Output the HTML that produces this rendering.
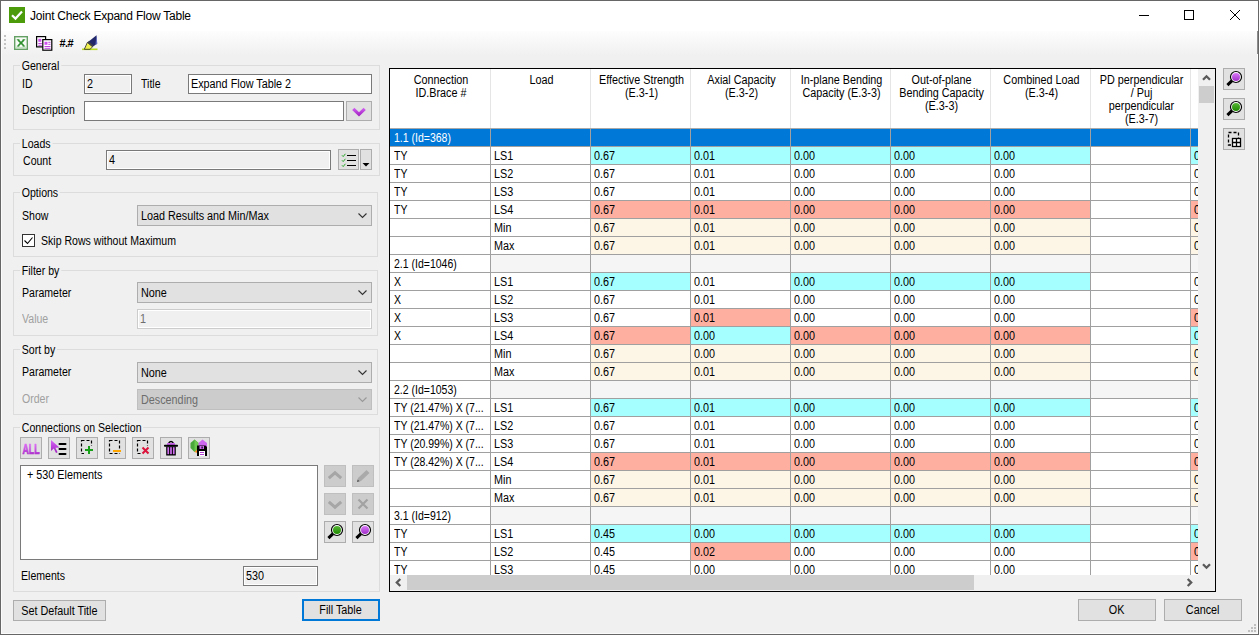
<!DOCTYPE html>
<html><head><meta charset="utf-8"><title>Joint Check Expand Flow Table</title>
<style>
*{box-sizing:border-box;margin:0;padding:0}
html,body{width:1259px;height:635px;overflow:hidden;background:#f0f0f0}
body{font-family:"Liberation Sans",sans-serif;font-size:12px;color:#000;position:relative}
.s{display:inline-block;transform:scaleX(.9);transform-origin:0 50%;white-space:nowrap}
.s0{transform:scaleX(.875)}
.sc{display:inline-block;transform:scaleX(.9);transform-origin:50% 50%;white-space:nowrap}
.abs,.lbl,.tb,.btn,.gb,.cb{position:absolute}
#win{position:absolute;left:0;top:0;width:1259px;height:635px;border:1px solid #666}
#inner{position:absolute;left:1px;top:31px;width:1257px;height:603px;border:1px solid #fbfbfb;border-top:none}
#title{position:absolute;left:1px;top:1px;width:1257px;height:30px;background:#fff}
#title .t{position:absolute;left:29px;top:7px;font-size:12px;line-height:16px;white-space:nowrap;letter-spacing:-.22px}
#tool{position:absolute;left:1px;top:31px;width:1257px;height:25px;background:linear-gradient(#fdfdfd,#f0f0f0)}
.lbl{white-space:nowrap;line-height:14px;height:14px;transform:scaleX(.88);transform-origin:0 0}
.dis{color:#a0a0a0}
.gb{border:1px solid #dcdcdc}
.gb>span{position:absolute;top:-7px;left:6px;background:#f0f0f0;padding:0 2px;line-height:14px;white-space:nowrap;transform:scaleX(.88);transform-origin:0 0}
.tb{border:1px solid #7a7a7a;background:#fff;height:20px;line-height:16px;padding:1px 0 0 2px;white-space:nowrap;overflow:hidden}
.tb.ro{background:#f0f0f0;box-shadow:inset 0 0 0 1px #fff}
.tb.off{border-color:#ccc;background:#f0f0f0;color:#6d6d6d;box-shadow:inset 0 0 0 1px #fff}
.cb{border:1px solid #adadad;background:#e1e1e1;height:21px;line-height:17px;padding:2px 0 0 3px;white-space:nowrap}
.cb.off{background:#cccccc;border-color:#bfbfbf;color:#6d6d6d}
.cb svg{position:absolute;right:4px;top:7px}
.btn{border:1px solid #adadad;background:#e1e1e1;text-align:center;white-space:nowrap}
.btn.off{background:#cccccc;border-color:#bfbfbf}
.btn svg{position:absolute;left:-1px;top:-1px}
.grid{position:absolute;left:389px;top:68px;width:827px;height:524px;border:1px solid #000;background:#fff;overflow:hidden}
.gin{position:absolute;left:0;top:0;width:808px;height:506px;overflow:hidden}
.ghead{position:absolute;left:0;top:0;width:900px;height:60px;border-bottom:1px solid #a8a8a8;background:#fff}
.hc{position:absolute;top:0;height:59px;width:100px;border-right:1px solid #e5e5e5}
.hs{position:absolute;left:1px;top:5px;width:110px;text-align:center;line-height:13px;transform:scaleX(.9);transform-origin:0 0}
.row{position:absolute;left:0;width:900px;height:18px}
.c{position:absolute;top:0;height:18px;width:100px;border-right:1px solid #a0a0a0;border-bottom:1px solid #a0a0a0;line-height:17px;padding:1px 0 0 3px;white-space:nowrap;overflow:hidden;background:#fff}
.gr .c{background:#f5f5f5}
.gr .c.f{background:#fff}
.sel .c{background:#0078d7;color:#fff}
.vsb{position:absolute;left:808px;top:0;width:17px;height:506px;background:#f0f0f0}
.hsb{position:absolute;left:0;top:506px;width:808px;height:16px;background:#f0f0f0}
.corner{position:absolute;left:808px;top:506px;width:17px;height:16px;background:#f0f0f0}
.thumb{position:absolute;background:#cdcdcd}
</style></head><body>
<div id="title">
<svg class="abs" style="left:8px;top:6px" width="16" height="16" viewBox="0 0 16 16"><rect width="16" height="16" fill="#4b9b0a"/><path d="M3 8.2 L6.5 11.6 L13 4.6" fill="none" stroke="#fff" stroke-width="2.2"/></svg>
<div class="t">Joint Check Expand Flow Table</div>
<svg class="abs" style="left:1130px;top:0" width="128" height="30" viewBox="0 0 128 30"><g stroke="#000" stroke-width="1" fill="none"><path d="M8 14.5h10"/><rect x="53.5" y="9.5" width="9" height="9"/><path d="M99 9l10 10M109 9l-10 10"/></g></svg>
</div>
<div id="tool">
<svg class="abs" style="left:3px;top:4px" width="3" height="15" viewBox="0 0 3 15"><g fill="#c3c3c3"><rect x="0" y="0" width="2" height="2"/><rect x="0" y="4" width="2" height="2"/><rect x="0" y="8" width="2" height="2"/><rect x="0" y="12" width="2" height="2"/></g></svg>
<svg class="abs" style="left:13px;top:5px" width="14" height="14" viewBox="0 0 14 14"><rect x=".7" y=".7" width="12.600" height="12.600" fill="#f6fbf6" stroke="#64a064" stroke-width="1.400"/><path d="M4 3.800l6 6.200M10 3.800l-6 6.200" stroke="#2f8f2f" stroke-width="1.700"/><path d="M2.800 3.600h2.600M8.600 3.600h2.600M2.800 10.200h2.600M8.600 10.200h2.600" stroke="#4a9a4a" stroke-width=".9"/><path d="M2 11.800h10" stroke="#b4d6b4" stroke-width="1"/></svg>
<svg class="abs" style="left:35px;top:5px" width="17" height="15" viewBox="0 0 17 15"><rect x=".6" y=".6" width="9" height="10.300" fill="#fff" stroke="#000" stroke-width="1.200"/><rect x="2.300" y="2.800" width="3" height="3" fill="#d050f0"/><path d="M2.300 7.500h3.500M2.300 9.300h3.500" stroke="#c040e0" stroke-width="1"/><rect x="6.800" y="3.600" width="9" height="10.600" fill="#fff" stroke="#000" stroke-width="1.200"/><rect x="8.500" y="5.800" width="3" height="3" fill="#d050f0"/><path d="M12.300 6.300h2.200M12.300 8.300h2.200M8.500 10.500h6M8.500 12.300h6" stroke="#c040e0" stroke-width="1"/></svg>
<div class="abs" style="left:58.500px;top:6px;font-weight:bold;font-size:11px;line-height:13px;letter-spacing:-.6px;white-space:nowrap">#.#</div>
<svg class="abs" style="left:81px;top:3px" width="17" height="17" viewBox="0 0 17 17"><path d="M0 15.300h15.500" stroke="#b8e020" stroke-width="1.600"/><path d="M5.400 8.400L10.600 12.800L8 15.300H2.300z" fill="#f0f050" stroke="#222" stroke-width=".8"/><path d="M14.500 1.200L15.200 9.700L10.600 12.800L5.400 8.400z" fill="#23286a"/><path d="M5.400 8.400l1.200-1.100 5.200 4.400-1.200 1.100z" fill="#444"/><path d="M14.500 1.200l.7 8.500-1.800 1.200z" fill="#6470c8"/></svg>
</div>
<div id="inner"></div>

<!-- General -->
<div class="gb" style="left:13px;top:65px;width:367px;height:65px"><span>General</span></div>
<div class="lbl" style="left:22px;top:77px">ID</div>
<div class="tb ro" style="left:84px;top:74px;width:48px"><span class="s">2</span></div>
<div class="lbl" style="left:141px;top:77px">Title</div>
<div class="tb" style="left:188px;top:74px;width:184px"><span class="s">Expand Flow Table 2</span></div>
<div class="lbl" style="left:22px;top:103px">Description</div>
<div class="tb" style="left:84px;top:101px;width:260px"></div>
<div class="btn" style="left:346px;top:101px;width:26px;height:20px"><svg width="26" height="20" viewBox="0 0 26 20"><defs><linearGradient id="gch" gradientUnits="userSpaceOnUse" x1="0" y1="6" x2="0" y2="15"><stop offset="0" stop-color="#d868f8"/><stop offset="1" stop-color="#a020c0"/></linearGradient></defs><path d="M7.300 7.800L13 13.300L18.700 7.800" fill="none" stroke="url(#gch)" stroke-width="3.200"/></svg></div>

<!-- Loads -->
<div class="gb" style="left:13px;top:143px;width:367px;height:33px"><span>Loads</span></div>
<div class="lbl" style="left:23px;top:154px">Count</div>
<div class="tb ro" style="left:106px;top:150px;width:225px"><span class="s">4</span></div>
<div class="btn" style="left:338px;top:149px;width:21px;height:21px"><svg width="21" height="21" viewBox="0 0 21 21"><path d="M9 6.500h9M9 11.500h9M9 16.500h9" stroke="#000" stroke-width="1.100"/><path d="M4 6.300l1.200 1.300 2.200-2.800M4 11.300l1.200 1.300 2.200-2.800M4 16.300l1.200 1.300 2.200-2.800" fill="none" stroke="#2aa82a" stroke-width="1"/></svg></div>
<div class="btn" style="left:360px;top:149px;width:12px;height:21px"><svg width="12" height="21" viewBox="0 0 12 21"><path d="M2.500 14h7l-3.500 3.500z" fill="#000"/></svg></div>

<!-- Options -->
<div class="gb" style="left:13px;top:192px;width:365px;height:65px"><span>Options</span></div>
<div class="lbl" style="left:22px;top:209px">Show</div>
<div class="cb" style="left:137px;top:205px;width:235px"><span class="s">Load Results and Min/Max</span><svg width="9" height="6" viewBox="0 0 9 6"><path d="M.5 .5l4 4 4-4" fill="none" stroke="#333" stroke-width="1.1"/></svg></div>
<div class="abs" style="left:22px;top:234px;width:13px;height:13px;border:1px solid #333;background:#fff"><svg width="11" height="11" viewBox="0 0 11 11" style="display:block"><path d="M1.5 5.5l3 3 5-6" fill="none" stroke="#000" stroke-width="1.1"/></svg></div>
<div class="lbl" style="left:41px;top:234px">Skip Rows without Maximum</div>

<!-- Filter by -->
<div class="gb" style="left:13px;top:270px;width:365px;height:66px"><span>Filter by</span></div>
<div class="lbl" style="left:22px;top:286px">Parameter</div>
<div class="cb" style="left:137px;top:282px;width:235px"><span class="s">None</span><svg width="9" height="6" viewBox="0 0 9 6"><path d="M.5 .5l4 4 4-4" fill="none" stroke="#333" stroke-width="1.1"/></svg></div>
<div class="lbl dis" style="left:22px;top:312px">Value</div>
<div class="tb off" style="left:137px;top:309px;width:235px"><span class="s">1</span></div>

<!-- Sort by -->
<div class="gb" style="left:13px;top:349px;width:365px;height:66px"><span>Sort by</span></div>
<div class="lbl" style="left:22px;top:365px">Parameter</div>
<div class="cb" style="left:137px;top:362px;width:235px"><span class="s">None</span><svg width="9" height="6" viewBox="0 0 9 6"><path d="M.5 .5l4 4 4-4" fill="none" stroke="#333" stroke-width="1.1"/></svg></div>
<div class="lbl dis" style="left:22px;top:392px">Order</div>
<div class="cb off" style="left:137px;top:389px;width:235px"><span class="s">Descending</span><svg width="9" height="6" viewBox="0 0 9 6"><path d="M.5 .5l4 4 4-4" fill="none" stroke="#999" stroke-width="1.1"/></svg></div>

<!-- Connections -->
<div class="gb" style="left:13px;top:427px;width:367px;height:165px"><span>Connections on Selection</span></div>
<div class="btn" style="left:20px;top:437px;width:22px;height:22px"><svg width="22" height="22" viewBox="0 0 22 22"><defs><linearGradient id="gall" x1="0" y1="0" x2="0" y2="1"><stop offset="0" stop-color="#e878ff"/><stop offset="1" stop-color="#a020c0"/></linearGradient></defs><text x="2.500" y="17.300" font-family="Liberation Sans,sans-serif" font-weight="bold" font-size="14.500" textLength="17" lengthAdjust="spacingAndGlyphs" fill="url(#gall)" stroke="url(#gall)" stroke-width=".7">ALL</text></svg></div>
<div class="btn" style="left:48px;top:437px;width:22px;height:22px"><svg width="22" height="22" viewBox="0 0 22 22"><defs><linearGradient id="gcur" x1="0" y1="0" x2="0" y2="1"><stop offset="0" stop-color="#d868f8"/><stop offset="1" stop-color="#a020c0"/></linearGradient></defs><path d="M3 3v11l2.8-2.6 2.2 4.6 1.6-.8-2.2-4.4 4-.4z" fill="url(#gcur)"/><path d="M11.5 7h6M11.5 12h6M11.5 17h6" stroke="#000" stroke-width="2" stroke-linecap="round"/></svg></div>
<div class="btn" style="left:76px;top:437px;width:22px;height:22px"><svg width="22" height="22" viewBox="0 0 22 22"><path d="M5.5 3.5h10v13h-10z" fill="none" stroke="#000" stroke-width="1.2" stroke-dasharray="3 2"/><rect x="8" y="9" width="9" height="9" fill="#e1e1e1"/><path d="M13 9v8M9 13h8" stroke="#18a018" stroke-width="2"/></svg></div>
<div class="btn" style="left:104px;top:437px;width:22px;height:22px"><svg width="22" height="22" viewBox="0 0 22 22"><path d="M5.5 3.5h10v13h-10z" fill="none" stroke="#000" stroke-width="1.2" stroke-dasharray="3 2"/><rect x="8" y="12" width="9" height="4" fill="#e1e1e1"/><path d="M9 14h8" stroke="#ffa500" stroke-width="2"/></svg></div>
<div class="btn" style="left:132px;top:437px;width:22px;height:22px"><svg width="22" height="22" viewBox="0 0 22 22"><path d="M5.5 3.5h10v13h-10z" fill="none" stroke="#000" stroke-width="1.2" stroke-dasharray="3 2"/><rect x="9" y="9" width="9" height="9" fill="#e1e1e1"/><path d="M10.5 10.5l6 6M16.5 10.5l-6 6" stroke="#dc143c" stroke-width="2"/></svg></div>
<div class="btn" style="left:160px;top:437px;width:22px;height:22px"><svg width="22" height="22" viewBox="0 0 22 22"><path d="M8.700 6q2.300-2.800 4.600 0" fill="none" stroke="#000" stroke-width="1.500"/><rect x="7" y="6" width="8" height="2" fill="#cc66ee"/><rect x="4" y="7.700" width="14" height="2" rx=".8" fill="#000"/><rect x="6.200" y="9.500" width="9.600" height="9" fill="#000"/><rect x="7.400" y="10.200" width="1.700" height="7" fill="#d070f0"/><rect x="10.150" y="10.200" width="1.700" height="7" fill="#d070f0"/><rect x="12.900" y="10.200" width="1.700" height="7" fill="#d070f0"/></svg></div>
<div class="btn" style="left:188px;top:437px;width:22px;height:22px"><svg width="22" height="22" viewBox="0 0 22 22"><path d="M2.5 6l4-3.5 4 3.5v5l-4 4-4-4z" fill="#4aa83a"/><path d="M6.500 2.500l4 3.500v5l-4 4z" fill="#6cc84e"/><path d="M10.500 6l4-3.500 4.500 3.500v5h-8.500z" fill="#cc66ee"/><path d="M6.500 15l4-4 1-2 1 2v6z" fill="#ff8c1a"/><path d="M9 8.500h8.500l1.500 1.500v9h-10z" fill="#000"/><rect x="11.500" y="9" width="4.500" height="3" fill="#cc66ee"/><rect x="13.500" y="9.500" width="1.200" height="2" fill="#000"/><rect x="11" y="14" width="6" height="5" fill="#fff"/><path d="M12 15.500h4M12 17.500h4" stroke="#b040d0" stroke-width="1"/></svg></div>
<div class="tb" style="left:20px;top:465px;width:298px;height:95px;padding:1px 0 0 6px"><span class="s">+ 530 Elements</span></div>
<div class="btn off" style="left:324px;top:465px;width:22px;height:22px"><svg width="22" height="22" viewBox="0 0 22 22"><path d="M4.800 13.200l6.200-5.400 6.200 5.400" fill="none" stroke="#a6a6a6" stroke-width="3"/></svg></div>
<div class="btn off" style="left:352px;top:465px;width:22px;height:22px"><svg width="22" height="22" viewBox="0 0 22 22"><path d="M5 17l1-4 8.500-8 3 3-8.500 8z" fill="#aaaaaa"/><path d="M5 17l.7-2.600 1.900 1.900z" fill="#555"/></svg></div>
<div class="btn off" style="left:324px;top:493px;width:22px;height:22px"><svg width="22" height="22" viewBox="0 0 22 22"><path d="M4.800 8.800l6.200 5.400 6.200-5.400" fill="none" stroke="#a6a6a6" stroke-width="3"/></svg></div>
<div class="btn off" style="left:352px;top:493px;width:22px;height:22px"><svg width="22" height="22" viewBox="0 0 22 22"><path d="M6.500 6.500l9 9M15.500 6.500l-9 9" stroke="#a2a2a2" stroke-width="2.200"/></svg></div>
<div class="btn" style="left:324px;top:521px;width:22px;height:22px"><svg width="22" height="22" viewBox="0 0 22 22"><defs><linearGradient id="mg1" x1="0" y1="0" x2="0" y2="1"><stop offset="0" stop-color="#58b838"/><stop offset="1" stop-color="#1e8a00"/></linearGradient></defs><path d="M9.6 12.2L4.4 17.2" stroke="#000" stroke-width="3" stroke-linecap="butt" fill="none"/><circle cx="13" cy="9" r="5.5" fill="#fff" stroke="#000" stroke-width="1.2"/><circle cx="13" cy="9" r="4" fill="url(#mg1)"/></svg></div>
<div class="btn" style="left:352px;top:521px;width:22px;height:22px"><svg width="22" height="22" viewBox="0 0 22 22"><defs><linearGradient id="mp1" x1="0" y1="0" x2="0" y2="1"><stop offset="0" stop-color="#d878f8"/><stop offset="1" stop-color="#a030c8"/></linearGradient></defs><path d="M9.6 12.2L4.4 17.2" stroke="#000" stroke-width="3" stroke-linecap="butt" fill="none"/><circle cx="13" cy="9" r="5.5" fill="#fff" stroke="#000" stroke-width="1.2"/><circle cx="13" cy="9" r="4" fill="url(#mp1)"/></svg></div>
<div class="lbl" style="left:21px;top:569px">Elements</div>
<div class="tb ro" style="left:243px;top:566px;width:75px"><span class="s">530</span></div>

<div class="btn" style="left:13px;top:600px;width:93px;height:21px;line-height:21px"><span class="sc">Set Default Title</span></div>
<div class="btn" style="left:302px;top:599px;width:78px;height:22px;line-height:18px;border:2px solid #0078d7"><span class="sc">Fill Table</span></div>
<div class="btn" style="left:1078px;top:599px;width:78px;height:22px;line-height:20px"><span class="sc">OK</span></div>
<div class="btn" style="left:1164px;top:599px;width:78px;height:22px;line-height:20px"><span class="sc">Cancel</span></div>

<div class="btn" style="left:1223px;top:68px;width:22px;height:22px"><svg width="22" height="22" viewBox="0 0 22 22"><defs><linearGradient id="mp2" x1="0" y1="0" x2="0" y2="1"><stop offset="0" stop-color="#d878f8"/><stop offset="1" stop-color="#a030c8"/></linearGradient></defs><path d="M9.6 12.2L4.4 17.2" stroke="#000" stroke-width="3" stroke-linecap="butt" fill="none"/><circle cx="13" cy="9" r="5.5" fill="#fff" stroke="#000" stroke-width="1.2"/><circle cx="13" cy="9" r="4" fill="url(#mp2)"/></svg></div>
<div class="btn" style="left:1223px;top:98px;width:22px;height:22px"><svg width="22" height="22" viewBox="0 0 22 22"><defs><linearGradient id="mg2" x1="0" y1="0" x2="0" y2="1"><stop offset="0" stop-color="#58b838"/><stop offset="1" stop-color="#1e8a00"/></linearGradient></defs><path d="M9.6 12.2L4.4 17.2" stroke="#000" stroke-width="3" stroke-linecap="butt" fill="none"/><circle cx="13" cy="9" r="5.5" fill="#fff" stroke="#000" stroke-width="1.2"/><circle cx="13" cy="9" r="4" fill="url(#mg2)"/></svg></div>
<div class="btn" style="left:1223px;top:128px;width:22px;height:22px"><svg width="22" height="22" viewBox="0 0 22 22"><path d="M5.500 4.500h10v12.500h-10z" fill="none" stroke="#000" stroke-width="1.300" stroke-dasharray="3 2"/><rect x="9.500" y="10.500" width="8" height="8" fill="#fff" stroke="#000" stroke-width="1.300"/><path d="M13.500 10.500v8M9.500 14.500h8" stroke="#000" stroke-width="1.300"/></svg></div>

<div class="grid"><div class="gin">
<div class="ghead">
<div class="hc" style="left:0;width:101px;padding-left:4px"><div class="hs" style="width:111.1px">Connection<br>ID.Brace #</div></div>
<div class="hc" style="left:101px"><div class="hs">Load</div></div>
<div class="hc" style="left:201px"><div class="hs">Effective Strength<br>(E.3-1)</div></div>
<div class="hc" style="left:301px"><div class="hs">Axial Capacity<br>(E.3-2)</div></div>
<div class="hc" style="left:401px"><div class="hs">In-plane Bending<br>Capacity (E.3-3)</div></div>
<div class="hc" style="left:501px"><div class="hs">Out-of-plane<br>Bending Capacity<br>(E.3-3)</div></div>
<div class="hc" style="left:601px"><div class="hs">Combined Load<br>(E.3-4)</div></div>
<div class="hc" style="left:701px"><div class="hs">PD perpendicular<br>/ Puj<br>perpendicular<br>(E.3-7)</div></div>
<div class="hc" style="left:801px"><div class="hs"></div></div>
</div>
<div class="row gr sel" style="top:60px">
<div class="c" style="left:0;width:101px;padding-left:4px"><span class="s s0">1.1 (Id=368)</span></div>
<div class="c" style="left:101px"></div>
<div class="c" style="left:201px"></div>
<div class="c" style="left:301px"></div>
<div class="c" style="left:401px"></div>
<div class="c" style="left:501px"></div>
<div class="c" style="left:601px"></div>
<div class="c" style="left:701px"></div>
<div class="c" style="left:801px"></div>
</div>
<div class="row" style="top:78px">
<div class="c" style="left:0;width:101px;padding-left:4px"><span class="s s0">TY</span></div>
<div class="c" style="left:101px"><span class="s">LS1</span></div>
<div class="c" style="left:201px;background:#a6ffff"><span class="s">0.67</span></div>
<div class="c" style="left:301px;background:#a6ffff"><span class="s">0.01</span></div>
<div class="c" style="left:401px;background:#a6ffff"><span class="s">0.00</span></div>
<div class="c" style="left:501px;background:#a6ffff"><span class="s">0.00</span></div>
<div class="c" style="left:601px;background:#a6ffff"><span class="s">0.00</span></div>
<div class="c" style="left:701px"></div>
<div class="c" style="left:801px;background:#a6ffff"><span class="s">0.00</span></div>
</div>
<div class="row" style="top:96px">
<div class="c" style="left:0;width:101px;padding-left:4px"><span class="s s0">TY</span></div>
<div class="c" style="left:101px"><span class="s">LS2</span></div>
<div class="c" style="left:201px"><span class="s">0.67</span></div>
<div class="c" style="left:301px"><span class="s">0.01</span></div>
<div class="c" style="left:401px"><span class="s">0.00</span></div>
<div class="c" style="left:501px"><span class="s">0.00</span></div>
<div class="c" style="left:601px"><span class="s">0.00</span></div>
<div class="c" style="left:701px"></div>
<div class="c" style="left:801px"><span class="s">0.00</span></div>
</div>
<div class="row" style="top:114px">
<div class="c" style="left:0;width:101px;padding-left:4px"><span class="s s0">TY</span></div>
<div class="c" style="left:101px"><span class="s">LS3</span></div>
<div class="c" style="left:201px"><span class="s">0.67</span></div>
<div class="c" style="left:301px"><span class="s">0.01</span></div>
<div class="c" style="left:401px"><span class="s">0.00</span></div>
<div class="c" style="left:501px"><span class="s">0.00</span></div>
<div class="c" style="left:601px"><span class="s">0.00</span></div>
<div class="c" style="left:701px"></div>
<div class="c" style="left:801px"><span class="s">0.00</span></div>
</div>
<div class="row" style="top:132px">
<div class="c" style="left:0;width:101px;padding-left:4px"><span class="s s0">TY</span></div>
<div class="c" style="left:101px"><span class="s">LS4</span></div>
<div class="c" style="left:201px;background:#ffafa0"><span class="s">0.67</span></div>
<div class="c" style="left:301px;background:#ffafa0"><span class="s">0.01</span></div>
<div class="c" style="left:401px;background:#ffafa0"><span class="s">0.00</span></div>
<div class="c" style="left:501px;background:#ffafa0"><span class="s">0.00</span></div>
<div class="c" style="left:601px;background:#ffafa0"><span class="s">0.00</span></div>
<div class="c" style="left:701px"></div>
<div class="c" style="left:801px;background:#ffafa0"><span class="s">0.00</span></div>
</div>
<div class="row" style="top:150px">
<div class="c" style="left:0;width:101px;padding-left:4px"></div>
<div class="c" style="left:101px"><span class="s">Min</span></div>
<div class="c" style="left:201px;background:#fdf5e6"><span class="s">0.67</span></div>
<div class="c" style="left:301px;background:#fdf5e6"><span class="s">0.01</span></div>
<div class="c" style="left:401px;background:#fdf5e6"><span class="s">0.00</span></div>
<div class="c" style="left:501px;background:#fdf5e6"><span class="s">0.00</span></div>
<div class="c" style="left:601px;background:#fdf5e6"><span class="s">0.00</span></div>
<div class="c" style="left:701px"></div>
<div class="c" style="left:801px;background:#fdf5e6"><span class="s">0.00</span></div>
</div>
<div class="row" style="top:168px">
<div class="c" style="left:0;width:101px;padding-left:4px"></div>
<div class="c" style="left:101px"><span class="s">Max</span></div>
<div class="c" style="left:201px;background:#fdf5e6"><span class="s">0.67</span></div>
<div class="c" style="left:301px;background:#fdf5e6"><span class="s">0.01</span></div>
<div class="c" style="left:401px;background:#fdf5e6"><span class="s">0.00</span></div>
<div class="c" style="left:501px;background:#fdf5e6"><span class="s">0.00</span></div>
<div class="c" style="left:601px;background:#fdf5e6"><span class="s">0.00</span></div>
<div class="c" style="left:701px"></div>
<div class="c" style="left:801px;background:#fdf5e6"><span class="s">0.00</span></div>
</div>
<div class="row gr" style="top:186px">
<div class="c f" style="left:0;width:101px;padding-left:4px"><span class="s s0">2.1 (Id=1046)</span></div>
<div class="c" style="left:101px"></div>
<div class="c" style="left:201px"></div>
<div class="c" style="left:301px"></div>
<div class="c" style="left:401px"></div>
<div class="c" style="left:501px"></div>
<div class="c" style="left:601px"></div>
<div class="c" style="left:701px"></div>
<div class="c" style="left:801px"></div>
</div>
<div class="row" style="top:204px">
<div class="c" style="left:0;width:101px;padding-left:4px"><span class="s s0">X</span></div>
<div class="c" style="left:101px"><span class="s">LS1</span></div>
<div class="c" style="left:201px;background:#a6ffff"><span class="s">0.67</span></div>
<div class="c" style="left:301px"><span class="s">0.01</span></div>
<div class="c" style="left:401px;background:#a6ffff"><span class="s">0.00</span></div>
<div class="c" style="left:501px;background:#a6ffff"><span class="s">0.00</span></div>
<div class="c" style="left:601px;background:#a6ffff"><span class="s">0.00</span></div>
<div class="c" style="left:701px"></div>
<div class="c" style="left:801px"><span class="s">0.00</span></div>
</div>
<div class="row" style="top:222px">
<div class="c" style="left:0;width:101px;padding-left:4px"><span class="s s0">X</span></div>
<div class="c" style="left:101px"><span class="s">LS2</span></div>
<div class="c" style="left:201px"><span class="s">0.67</span></div>
<div class="c" style="left:301px"><span class="s">0.01</span></div>
<div class="c" style="left:401px"><span class="s">0.00</span></div>
<div class="c" style="left:501px"><span class="s">0.00</span></div>
<div class="c" style="left:601px"><span class="s">0.00</span></div>
<div class="c" style="left:701px"></div>
<div class="c" style="left:801px"><span class="s">0.00</span></div>
</div>
<div class="row" style="top:240px">
<div class="c" style="left:0;width:101px;padding-left:4px"><span class="s s0">X</span></div>
<div class="c" style="left:101px"><span class="s">LS3</span></div>
<div class="c" style="left:201px"><span class="s">0.67</span></div>
<div class="c" style="left:301px;background:#ffafa0"><span class="s">0.01</span></div>
<div class="c" style="left:401px"><span class="s">0.00</span></div>
<div class="c" style="left:501px"><span class="s">0.00</span></div>
<div class="c" style="left:601px"><span class="s">0.00</span></div>
<div class="c" style="left:701px"></div>
<div class="c" style="left:801px;background:#ffafa0"><span class="s">0.00</span></div>
</div>
<div class="row" style="top:258px">
<div class="c" style="left:0;width:101px;padding-left:4px"><span class="s s0">X</span></div>
<div class="c" style="left:101px"><span class="s">LS4</span></div>
<div class="c" style="left:201px;background:#ffafa0"><span class="s">0.67</span></div>
<div class="c" style="left:301px;background:#a6ffff"><span class="s">0.00</span></div>
<div class="c" style="left:401px;background:#ffafa0"><span class="s">0.00</span></div>
<div class="c" style="left:501px;background:#ffafa0"><span class="s">0.00</span></div>
<div class="c" style="left:601px;background:#ffafa0"><span class="s">0.00</span></div>
<div class="c" style="left:701px"></div>
<div class="c" style="left:801px;background:#a6ffff"><span class="s">0.00</span></div>
</div>
<div class="row" style="top:276px">
<div class="c" style="left:0;width:101px;padding-left:4px"></div>
<div class="c" style="left:101px"><span class="s">Min</span></div>
<div class="c" style="left:201px;background:#fdf5e6"><span class="s">0.67</span></div>
<div class="c" style="left:301px;background:#fdf5e6"><span class="s">0.00</span></div>
<div class="c" style="left:401px;background:#fdf5e6"><span class="s">0.00</span></div>
<div class="c" style="left:501px;background:#fdf5e6"><span class="s">0.00</span></div>
<div class="c" style="left:601px;background:#fdf5e6"><span class="s">0.00</span></div>
<div class="c" style="left:701px"></div>
<div class="c" style="left:801px;background:#fdf5e6"><span class="s">0.00</span></div>
</div>
<div class="row" style="top:294px">
<div class="c" style="left:0;width:101px;padding-left:4px"></div>
<div class="c" style="left:101px"><span class="s">Max</span></div>
<div class="c" style="left:201px;background:#fdf5e6"><span class="s">0.67</span></div>
<div class="c" style="left:301px;background:#fdf5e6"><span class="s">0.01</span></div>
<div class="c" style="left:401px;background:#fdf5e6"><span class="s">0.00</span></div>
<div class="c" style="left:501px;background:#fdf5e6"><span class="s">0.00</span></div>
<div class="c" style="left:601px;background:#fdf5e6"><span class="s">0.00</span></div>
<div class="c" style="left:701px"></div>
<div class="c" style="left:801px;background:#fdf5e6"><span class="s">0.00</span></div>
</div>
<div class="row gr" style="top:312px">
<div class="c f" style="left:0;width:101px;padding-left:4px"><span class="s s0">2.2 (Id=1053)</span></div>
<div class="c" style="left:101px"></div>
<div class="c" style="left:201px"></div>
<div class="c" style="left:301px"></div>
<div class="c" style="left:401px"></div>
<div class="c" style="left:501px"></div>
<div class="c" style="left:601px"></div>
<div class="c" style="left:701px"></div>
<div class="c" style="left:801px"></div>
</div>
<div class="row" style="top:330px">
<div class="c" style="left:0;width:101px;padding-left:4px"><span class="s s0">TY (21.47%) X (7...</span></div>
<div class="c" style="left:101px"><span class="s">LS1</span></div>
<div class="c" style="left:201px;background:#a6ffff"><span class="s">0.67</span></div>
<div class="c" style="left:301px;background:#a6ffff"><span class="s">0.01</span></div>
<div class="c" style="left:401px;background:#a6ffff"><span class="s">0.00</span></div>
<div class="c" style="left:501px;background:#a6ffff"><span class="s">0.00</span></div>
<div class="c" style="left:601px;background:#a6ffff"><span class="s">0.00</span></div>
<div class="c" style="left:701px"></div>
<div class="c" style="left:801px;background:#a6ffff"><span class="s">0.00</span></div>
</div>
<div class="row" style="top:348px">
<div class="c" style="left:0;width:101px;padding-left:4px"><span class="s s0">TY (21.47%) X (7...</span></div>
<div class="c" style="left:101px"><span class="s">LS2</span></div>
<div class="c" style="left:201px"><span class="s">0.67</span></div>
<div class="c" style="left:301px"><span class="s">0.01</span></div>
<div class="c" style="left:401px"><span class="s">0.00</span></div>
<div class="c" style="left:501px"><span class="s">0.00</span></div>
<div class="c" style="left:601px"><span class="s">0.00</span></div>
<div class="c" style="left:701px"></div>
<div class="c" style="left:801px"><span class="s">0.00</span></div>
</div>
<div class="row" style="top:366px">
<div class="c" style="left:0;width:101px;padding-left:4px"><span class="s s0">TY (20.99%) X (7...</span></div>
<div class="c" style="left:101px"><span class="s">LS3</span></div>
<div class="c" style="left:201px"><span class="s">0.67</span></div>
<div class="c" style="left:301px"><span class="s">0.01</span></div>
<div class="c" style="left:401px"><span class="s">0.00</span></div>
<div class="c" style="left:501px"><span class="s">0.00</span></div>
<div class="c" style="left:601px"><span class="s">0.00</span></div>
<div class="c" style="left:701px"></div>
<div class="c" style="left:801px"><span class="s">0.00</span></div>
</div>
<div class="row" style="top:384px">
<div class="c" style="left:0;width:101px;padding-left:4px"><span class="s s0">TY (28.42%) X (7...</span></div>
<div class="c" style="left:101px"><span class="s">LS4</span></div>
<div class="c" style="left:201px;background:#ffafa0"><span class="s">0.67</span></div>
<div class="c" style="left:301px;background:#ffafa0"><span class="s">0.01</span></div>
<div class="c" style="left:401px;background:#ffafa0"><span class="s">0.00</span></div>
<div class="c" style="left:501px;background:#ffafa0"><span class="s">0.00</span></div>
<div class="c" style="left:601px;background:#ffafa0"><span class="s">0.00</span></div>
<div class="c" style="left:701px"></div>
<div class="c" style="left:801px;background:#ffafa0"><span class="s">0.00</span></div>
</div>
<div class="row" style="top:402px">
<div class="c" style="left:0;width:101px;padding-left:4px"></div>
<div class="c" style="left:101px"><span class="s">Min</span></div>
<div class="c" style="left:201px;background:#fdf5e6"><span class="s">0.67</span></div>
<div class="c" style="left:301px;background:#fdf5e6"><span class="s">0.01</span></div>
<div class="c" style="left:401px;background:#fdf5e6"><span class="s">0.00</span></div>
<div class="c" style="left:501px;background:#fdf5e6"><span class="s">0.00</span></div>
<div class="c" style="left:601px;background:#fdf5e6"><span class="s">0.00</span></div>
<div class="c" style="left:701px"></div>
<div class="c" style="left:801px;background:#fdf5e6"><span class="s">0.00</span></div>
</div>
<div class="row" style="top:420px">
<div class="c" style="left:0;width:101px;padding-left:4px"></div>
<div class="c" style="left:101px"><span class="s">Max</span></div>
<div class="c" style="left:201px;background:#fdf5e6"><span class="s">0.67</span></div>
<div class="c" style="left:301px;background:#fdf5e6"><span class="s">0.01</span></div>
<div class="c" style="left:401px;background:#fdf5e6"><span class="s">0.00</span></div>
<div class="c" style="left:501px;background:#fdf5e6"><span class="s">0.00</span></div>
<div class="c" style="left:601px;background:#fdf5e6"><span class="s">0.00</span></div>
<div class="c" style="left:701px"></div>
<div class="c" style="left:801px;background:#fdf5e6"><span class="s">0.00</span></div>
</div>
<div class="row gr" style="top:438px">
<div class="c f" style="left:0;width:101px;padding-left:4px"><span class="s s0">3.1 (Id=912)</span></div>
<div class="c" style="left:101px"></div>
<div class="c" style="left:201px"></div>
<div class="c" style="left:301px"></div>
<div class="c" style="left:401px"></div>
<div class="c" style="left:501px"></div>
<div class="c" style="left:601px"></div>
<div class="c" style="left:701px"></div>
<div class="c" style="left:801px"></div>
</div>
<div class="row" style="top:456px">
<div class="c" style="left:0;width:101px;padding-left:4px"><span class="s s0">TY</span></div>
<div class="c" style="left:101px"><span class="s">LS1</span></div>
<div class="c" style="left:201px;background:#a6ffff"><span class="s">0.45</span></div>
<div class="c" style="left:301px;background:#a6ffff"><span class="s">0.00</span></div>
<div class="c" style="left:401px;background:#a6ffff"><span class="s">0.00</span></div>
<div class="c" style="left:501px;background:#a6ffff"><span class="s">0.00</span></div>
<div class="c" style="left:601px;background:#a6ffff"><span class="s">0.00</span></div>
<div class="c" style="left:701px"></div>
<div class="c" style="left:801px;background:#a6ffff"><span class="s">0.00</span></div>
</div>
<div class="row" style="top:474px">
<div class="c" style="left:0;width:101px;padding-left:4px"><span class="s s0">TY</span></div>
<div class="c" style="left:101px"><span class="s">LS2</span></div>
<div class="c" style="left:201px"><span class="s">0.45</span></div>
<div class="c" style="left:301px;background:#ffafa0"><span class="s">0.02</span></div>
<div class="c" style="left:401px"><span class="s">0.00</span></div>
<div class="c" style="left:501px"><span class="s">0.00</span></div>
<div class="c" style="left:601px"><span class="s">0.00</span></div>
<div class="c" style="left:701px"></div>
<div class="c" style="left:801px;background:#ffafa0"><span class="s">0.00</span></div>
</div>
<div class="row" style="top:492px">
<div class="c" style="left:0;width:101px;padding-left:4px"><span class="s s0">TY</span></div>
<div class="c" style="left:101px"><span class="s">LS3</span></div>
<div class="c" style="left:201px"><span class="s">0.45</span></div>
<div class="c" style="left:301px"><span class="s">0.00</span></div>
<div class="c" style="left:401px"><span class="s">0.00</span></div>
<div class="c" style="left:501px"><span class="s">0.00</span></div>
<div class="c" style="left:601px"><span class="s">0.00</span></div>
<div class="c" style="left:701px"></div>
<div class="c" style="left:801px"><span class="s">0.00</span></div>
</div>
</div>
<div class="vsb"><svg width="17" height="17" viewBox="0 0 17 17" style="position:absolute;left:0;top:0"><path d="M5 10.800l3.500-3.500 3.500 3.500" fill="none" stroke="#5a5a5a" stroke-width="2.300"/></svg><div class="thumb" style="left:1px;top:17px;width:15px;height:17px"></div><svg width="17" height="17" viewBox="0 0 17 17" style="position:absolute;left:0;top:489px"><path d="M5 6.200l3.500 3.500 3.500-3.500" fill="none" stroke="#5a5a5a" stroke-width="2.300"/></svg></div>
<div class="hsb"><svg width="17" height="17" viewBox="0 0 17 17" style="position:absolute;left:0;top:-1px"><path d="M10.300 5l-3.500 3.500 3.500 3.500" fill="none" stroke="#5a5a5a" stroke-width="2.300"/></svg><div class="thumb" style="left:17px;top:0;width:567px;height:15px"></div><svg width="17" height="17" viewBox="0 0 17 17" style="position:absolute;left:791px;top:-1px"><path d="M6.700 5l3.500 3.500-3.500 3.500" fill="none" stroke="#5a5a5a" stroke-width="2.300"/></svg></div>
<div class="corner"></div>
</div>
<svg class="abs" style="left:1248px;top:624px" width="9" height="9" viewBox="0 0 9 9"><g fill="#bfbfbf"><rect x="6" y="0" width="2" height="2"/><rect x="3" y="3" width="2" height="2"/><rect x="6" y="3" width="2" height="2"/><rect x="0" y="6" width="2" height="2"/><rect x="3" y="6" width="2" height="2"/><rect x="6" y="6" width="2" height="2"/></g></svg>
<div class="abs" style="left:1257px;top:31px;width:1px;height:23px;background:#8c8c8c"></div>
<div id="win"></div>
</body></html>
